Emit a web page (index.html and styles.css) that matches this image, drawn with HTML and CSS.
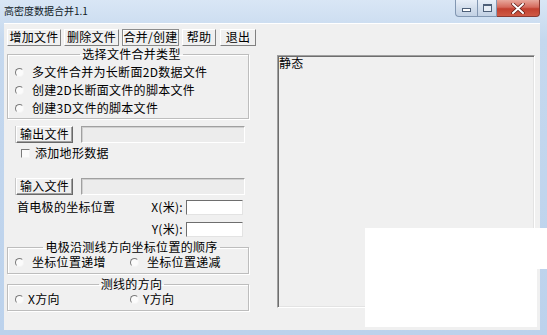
FILE: index.html
```html
<!DOCTYPE html>
<html lang="zh">
    <head>
        <meta charset="UTF-8" />
        <meta name="viewport" content="width=device-width, initial-scale=1.0" />
        <title>高密度数据合并1.1</title>
        <link rel="stylesheet" href="styles.css">
    </head>
    <body>
        <div id="window">
            <div class="titlebar">
                <span class="title">高密度数据合并1.1</span>
                <div class="caption">
                    <div class="cap-btn cap-min"><span></span></div>
                    <div class="cap-btn cap-max"><span></span></div>
                    <div class="cap-btn cap-close">
                        <svg width="14" height="11" viewBox="0 0 14 11">
                            <path d="M2 1 L12 10 M12 1 L2 10" stroke="#5a1a14" stroke-width="3.4" stroke-linecap="round" />
                            <path d="M2 1 L12 10 M12 1 L2 10" stroke="#fff" stroke-width="2" stroke-linecap="round" />
                        </svg>
                    </div>
                </div>
            </div>

            <div class="client">
                <div class="toolbar">
                    <button class="tb tb-add">增加文件</button>
                    <button class="tb tb-del">删除文件</button>
                    <button class="tb tb-merge">合并/创建</button>
                    <button class="tb tb-help">帮助</button>
                    <button class="tb tb-exit">退出</button>
                </div>

                <div class="body">
                    <div class="left">
                        <fieldset class="group g-type">
                            <legend>选择文件合并类型</legend>
                            <label class="radio"><i></i>多文件合并为长断面2D数据文件</label>
                            <label class="radio"><i></i>创建2D长断面文件的脚本文件</label>
                            <label class="radio"><i></i>创建3D文件的脚本文件</label>
                        </fieldset>

                        <div class="file-row out-row">
                            <button class="btn">输出文件</button>
                            <div class="field"></div>
                        </div>
                        <label class="check"><i></i>添加地形数据</label>

                        <div class="file-row in-row">
                            <button class="btn">输入文件</button>
                            <div class="field"></div>
                        </div>

                        <div class="coord-row x-row">
                            <span class="coord-name">首电极的坐标位置</span>
                            <span class="coord-label">X(米):</span>
                            <div class="edit"></div>
                        </div>
                        <div class="coord-row y-row">
                            <span class="coord-label">Y(米):</span>
                            <div class="edit"></div>
                        </div>

                        <fieldset class="group g-pair g-order">
                            <legend>电极沿测线方向坐标位置的顺序</legend>
                            <label class="radio"><i></i>坐标位置递增</label>
                            <label class="radio"><i></i>坐标位置递减</label>
                        </fieldset>

                        <fieldset class="group g-pair g-dir">
                            <legend>测线的方向</legend>
                            <label class="radio"><i></i>X方向</label>
                            <label class="radio"><i></i>Y方向</label>
                        </fieldset>
                    </div>

                    <div class="static">静态</div>
                </div>
            </div>

            <div class="mask"></div>
        </div>
    </body>
</html>
```

FILE: styles.css
```css
* {
    margin: 0;
    padding: 0;
    box-sizing: border-box;
}

body {
    font: 12px/14px "Noto Sans CJK SC", sans-serif;
    letter-spacing: 0.3px;
    color: #000;
    background: #fff;
}

button {
    font: inherit;
    letter-spacing: inherit;
    color: inherit;
}

#window {
    width: 547px;
    height: 335px;
    position: relative;
    padding: 0 7px 5px 4px;
    background: linear-gradient(#d9e6f5, #c5d8ee 40px, #bcd2ec);
}

/* title bar */
.titlebar {
    height: 23px;
    display: flex;
    justify-content: space-between;
}

.title {
    font-size: 10px;
    letter-spacing: 0;
    line-height: 21px;
    color: #111a26;
}

.caption {
    display: flex;
    height: 17px;
}

.cap-btn {
    display: flex;
    align-items: center;
    justify-content: center;
    border: 1px solid #8297b2;
    border-top: none;
    background: linear-gradient(#e8eff8, #d3deec 50%, #c2d1e4);
}

.cap-min {
    width: 22px;
    border-radius: 0 0 0 4px;
    border-right: none;
}

.cap-min span {
    width: 9px;
    height: 4px;
    margin-top: 4px;
    border: 1px solid #4d5f78;
    background: #fff;
}

.cap-max {
    width: 20px;
}

.cap-max span {
    width: 9px;
    height: 8px;
    border: 1px solid #4d5f78;
    border-top-width: 2px;
    background: #e8eef6;
}

.cap-close {
    width: 43px;
    border-color: #8a3a32;
    border-left: none;
    border-radius: 0 0 4px 0;
    background: linear-gradient(#e8a89c, #d56a5c 45%, #c2402f 55%, #cf5a45);
}

/* client area */
.client {
    height: 307px;
    background: #f0f0f0;
    border-top: 1px solid #fff;
}

.toolbar {
    display: flex;
    padding: 5px 0 0 3px;
}

.tb {
    height: 17px;
    line-height: 14px;
    padding-bottom: 1px;
    margin-right: 3px;
    background: #f0f0f0;
    border: 1px solid;
    border-color: #fff #808080 #808080 #fff;
}

.tb-add {
    width: 54px;
}

.tb-del {
    width: 55px;
}

.tb-merge {
    width: 57px;
    border-color: #8c8c8c;
    box-shadow: inset 1px 1px 0 #fff;
}

.tb-help {
    width: 34px;
    margin-right: 4px;
}

.tb-exit {
    width: 36px;
}

.body {
    display: flex;
}

.left {
    width: 242px;
    margin-left: 3px;
    margin-top: 1px;
}

/* group boxes */
.group {
    border: 1px solid #bdbdbd;
    box-shadow: inset 1px 1px 0 #fff, 1px 1px 0 #fff;
    padding: 2px 0 1px 7px;
}

.group legend {
    margin: 0 auto;
    padding: 0 2px;
    line-height: 14px;
}

.radio {
    display: flex;
    align-items: center;
    height: 18px;
}

.radio i,
.check i {
    width: 9px;
    height: 9px;
    border: 1px solid;
    border-color: #7a7a7a #f4f4f4 #f4f4f4 #7a7a7a;
    background: #fbfbfb;
}

.radio i {
    border-radius: 50%;
    margin-right: 8px;
}

.g-pair {
    display: grid;
    grid-template-columns: 115px auto;
    padding-bottom: 5px;
    margin-top: 3px;
}

.g-pair .radio {
    height: 12px;
    line-height: 12px;
}

.g-dir .radio i {
    margin-right: 4px;
}

/* file rows */
.file-row {
    display: flex;
    padding-left: 9px;
    margin-top: 7px;
}

.in-row {
    margin-top: 18px;
}

.btn {
    width: 57px;
    height: 17px;
    line-height: 13px;
    padding-bottom: 2px;
    background: #f0f0f0;
    border: 1px solid;
    border-color: #fff #696969 #696969 #fff;
    box-shadow: inset -1px -1px 0 #a0a0a0, -1px 0 0 #c8c8c8;
}

.field {
    width: 164px;
    height: 17px;
    margin-left: 8px;
    background: #ececec;
    border: 1px solid;
    border-color: #a0a0a0 #fff #fff #a0a0a0;
    box-shadow: inset 1px 1px 0 #d0d0d0;
}

.check {
    display: flex;
    align-items: center;
    height: 14px;
    margin-top: 3px;
    padding-left: 14px;
}

.check i {
    margin-right: 5px;
}

/* coordinates */
.coord-row {
    display: flex;
    align-items: center;
    justify-content: flex-end;
    height: 16px;
    padding: 0 6px 0 10px;
    margin-top: 4px;
}

.y-row {
    margin-top: 6px;
}

.coord-name {
    margin-right: auto;
}

.coord-label {
    margin-right: 3px;
}

.edit {
    width: 57px;
    height: 15px;
    background: #fff;
    border: 1px solid;
    border-color: #6e6e6e #e3e3e3 #e3e3e3 #6e6e6e;
}

/* static text panel */
.static {
    width: 258px;
    height: 253px;
    margin: 9px 0 0 28px;
    padding: 1px 0 0 1px;
    line-height: 12px;
    border: 1px solid;
    border-color: #a0a0a0 #fff #fff #a0a0a0;
    box-shadow: inset 1px 1px 0 #6e6e6e, inset -1px -1px 0 #e3e3e3;
}

/* white patch over the lower right corner of the shot */
.mask {
    position: absolute;
    left: 365px;
    top: 228px;
    width: 182px;
    height: 41px;
    background: #fff;
}

.mask::after {
    content: "";
    position: absolute;
    left: 0;
    top: 41px;
    width: 172px;
    height: 58px;
    background: #fff;
}
```
